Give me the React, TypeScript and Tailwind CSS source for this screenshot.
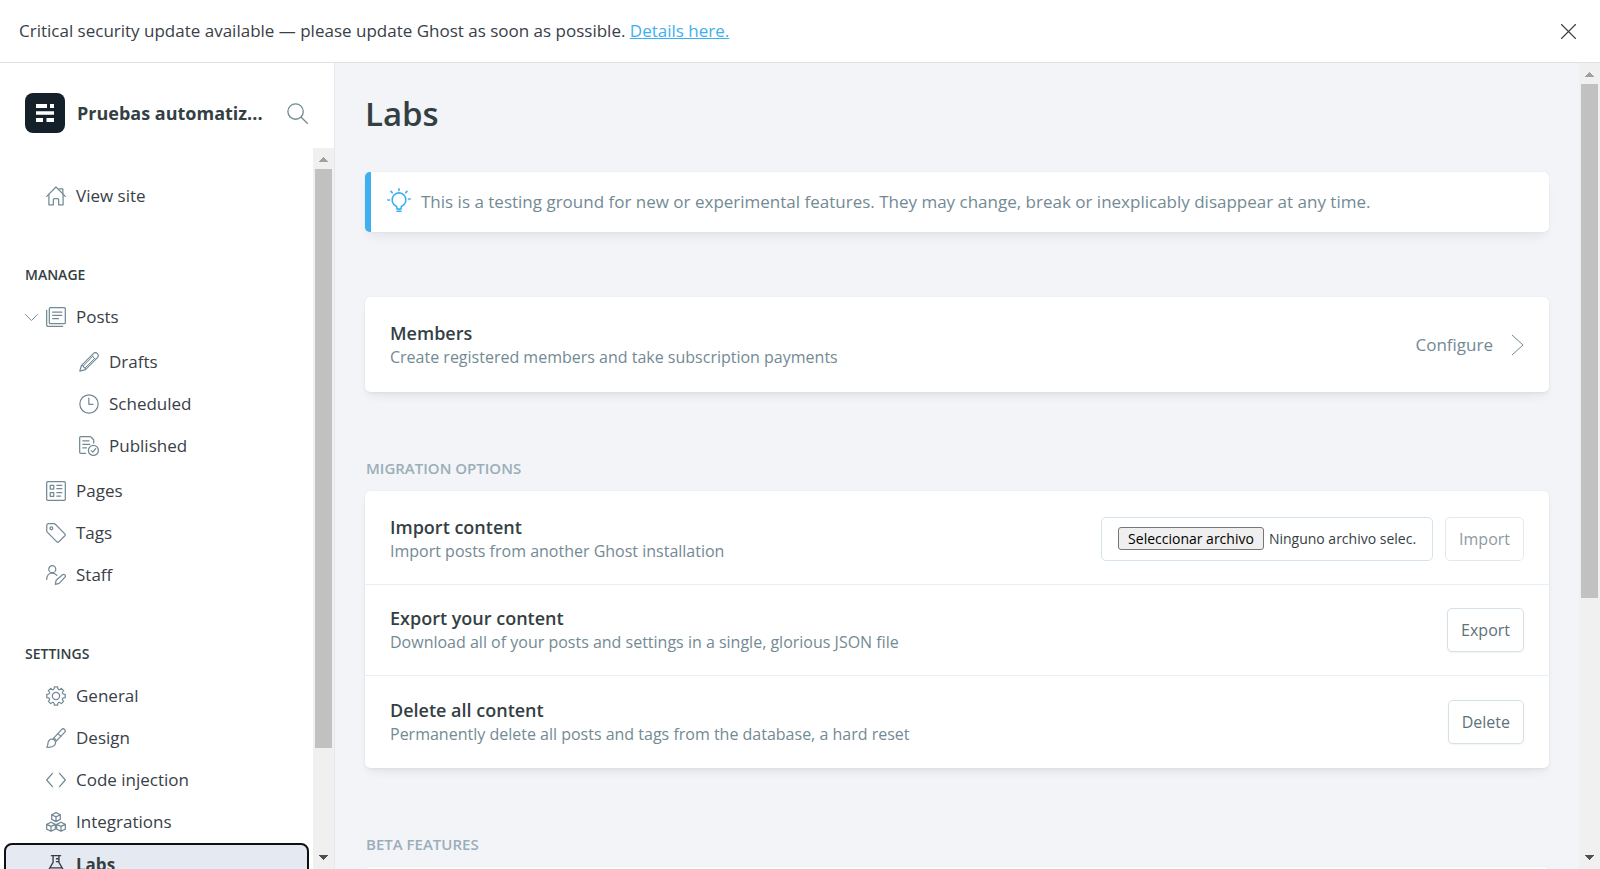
import type { ReactNode } from 'react'

function Icon({ children, className = 'size-5', width = 1.5 }: { children: ReactNode; className?: string; width?: number }) {
  return (
    <svg
      viewBox="0 0 24 24"
      className={`shrink-0 ${className}`}
      fill="none"
      stroke="currentColor"
      strokeWidth={width}
      strokeLinecap="round"
      strokeLinejoin="round"
      aria-hidden="true"
    >
      {children}
    </svg>
  )
}

const icons = {
  house: (
    <>
      <path d="M.8 12.5 12 1.2l11.2 11.3" />
      <path d="M3.5 10v12.6h5.3v-6.2a1.4 1.4 0 0 1 1.4-1.4h3.6a1.4 1.4 0 0 1 1.4 1.4v6.2h5.3V10" />
      <path d="M15.8 3.3h4.4v6" />
    </>
  ),
  posts: (
    <>
      <rect x="4" y=".8" width="19.2" height="19.2" rx="1.2" />
      <path d="M.8 4v17.7a1.5 1.5 0 0 0 1.5 1.5H20M8 6h11M8 10h11M8 14h7" />
    </>
  ),
  pencil: (
    <>
      <path d="m1 23 1.8-6.7L17.2 1.9a3.4 3.4 0 0 1 4.9 4.9L7.7 21.2z" />
      <path d="m15 4.1 4.9 4.9M2.8 16.3l2.4.4.5 2 1.700.3.300 2.200M5.200 16.700 17.200 4.600M7.400 19 19 7.500" strokeWidth="1.200" />
    </>
  ),
  clock: (
    <>
      <circle cx="12" cy="12" r="11" />
      <path d="M11.8 5v7.3h5" />
    </>
  ),
  published: (
    <>
      <path d="M8 20.8H2.3A1.5 1.5 0 0 1 .8 19.300V2.300A1.500 1.500 0 0 1 2.300.8h10.900c.4 0 .8.2 1.100.4l3 3c.3.3.4.7.4 1.100v3.200" />
      <path d="M4.500 5.800H12M4.500 10H13M4.500 14.200H9" />
      <circle cx="17.300" cy="17.300" r="6" />
      <path d="m14.700 17.500 1.900 1.900 3.400-4.300" />
    </>
  ),
  pages: (
    <>
      <rect x=".8" y=".8" width="22.400" height="22.400" rx="1.200" />
      <path d="M5 5.300h4.300v4.300H5zM5 14h4.300v4.300H5zM13 5.200h6M13 9.200h6M13 14h6M13 18h4.500" />
    </>
  ),
  tag: (
    <>
      <path d="M1 2.500A1.700 1.700 0 0 1 2.700.8h6.900c.6 0 1.200.2 1.600.7L22.600 13a1.700 1.700 0 0 1 0 2.300l-7.200 7.300a1.700 1.700 0 0 1-2.300 0L1.500 11c-.4-.5-.7-1-.7-1.600z" />
      <circle cx="6.400" cy="6.400" r="1.700" />
    </>
  ),
  staff: (
    <>
      <circle cx="7.500" cy="5" r="4.200" />
      <path d="M.8 17.300c0-4.300 2.500-7.600 6.700-7.600 2.400 0 4.300 1.100 5.500 2.800" />
      <path d="m11.200 23.200 1-5L19.800 11.700c2-1.500 4.500.8 3 2.900l-7 7.400z" />
    </>
  ),
  gear: (
    <>
      <circle cx="12" cy="12" r="4.300" />
      <path d="M10.050.97H13.950C13.840 4.630 15.910 5.490 18.420 2.830L21.170 5.580C18.510 8.090 19.370 10.160 23.030 10.050V13.950C19.370 13.840 18.510 15.910 21.170 18.420L18.420 21.170C15.910 18.510 13.840 19.370 13.950 23.030H10.050C10.160 19.370 8.090 18.510 5.580 21.170L2.830 18.420C5.490 15.910 4.630 13.840.97 13.950V10.050C4.630 10.160 5.490 8.090 2.830 5.580L5.580 2.830C8.090 5.490 10.160 4.630 10.050.97z" />
    </>
  ),
  brush: (
    <>
      <path d="M9 12.500 18.600 2c2.500-2.600 6 .6 3.700 3.300L12.600 15.500" />
      <path d="M9 12.500c1.700.4 3 1.500 3.600 3M14.300 6.700l3.600 3.400" />
      <path d="M1 23c1.700-2 .8-5.200 2.300-7.500 1.500-2.200 4-2.900 6.300-1.300 2.300 1.700 2.500 4.700.6 6.600C8 23 4 23.300 1 23z" />
    </>
  ),
  code: <path d="m7.700 4-6.900 8 6.900 8M16.300 4l6.900 8-6.900 8" />,
  cubes: (
    <>
      <path d="m12 .8 5.200 2.500v5.600L12 11.500 6.800 8.900V3.300zM6.800 3.300l5.200 2.500 5.200-2.500M12 5.800v5.700" />
      <path d="m6 12.300 5.200 2.500v5.700L6 23.100.8 20.500v-5.700zM.8 14.800 6 17.300l5.200-2.500M6 17.300v5.800" />
      <path d="m18 12.300 5.200 2.500v5.700L18 23.100l-5.200-2.600v-5.700zM12.800 14.800l5.200 2.500 5.200-2.500M18 17.300v5.800" />
    </>
  ),
  flask: (
    <>
      <path d="M6.500.8h11M8.500.8v8L1.200 21.300c-.5 1 .2 1.900 1.200 1.900h19.200c1 0 1.700-.9 1.200-1.900L15.500 8.800v-8M4.500 15.500h15M12.500 4.500h3M12.500 8h3" />
      <path d="M9 18.500h.1M14 17.500h.1" />
    </>
  ),
}

function NavItem({ icon, label, nested = false }: { icon: ReactNode; label: string; nested?: boolean }) {
  return (
    <li>
      <a href="#" className={`flex h-[42px] items-center gap-[10px] ${nested ? 'pl-[79px]' : 'pl-[46px]'}`}>
        <span className="flex text-[#738a94]">
          <Icon>{icon}</Icon>
        </span>
        {label}
      </a>
    </li>
  )
}

function Scrollbar({ thumb }: { thumb: string }) {
  return (
    <div className="flex w-[21px] shrink-0 flex-col items-center bg-[#f0f0f0]" aria-hidden="true">
      <svg viewBox="0 0 21 21" className="size-[21px] shrink-0" shapeRendering="crispEdges">
        <path d="M6 14h9l-4-5h-1z" fill="#a0a0a0" />
      </svg>
      <div className="flex w-full grow flex-col items-center">
        <div className={`w-[17px] bg-[#c1c1c1] ${thumb}`} />
      </div>
      <svg viewBox="0 0 21 21" className="size-[21px] shrink-0" shapeRendering="crispEdges">
        <path d="M6 7h9l-4 5h-1z" fill="#505050" />
      </svg>
    </div>
  )
}

const card = 'rounded-[5px] bg-white shadow-[0_0_1px_rgba(0,0,0,0.12),0_2px_4px_rgba(0,0,0,0.04),0_8px_12px_-4px_rgba(0,0,0,0.06)]'

function Setting({ title, text, children }: { title: string; text: string; children: ReactNode }) {
  return (
    <div className="flex h-[91px] items-center justify-between px-[25px]">
      <div>
        <h4 className="text-[18px] leading-6 font-semibold text-[#343f44]">{title}</h4>
        <p className="text-[16px] leading-6 text-[#738a94]">{text}</p>
      </div>
      {children}
    </div>
  )
}

const button = 'flex h-11 items-center rounded-[5px] border border-[#d5e1e8] bg-white px-[13px] text-[16px] text-[#5d7179]'
const groupTitle = 'mt-16 pl-px text-[15px] leading-6 font-semibold text-[#9baeb8]'
const navTitle = 'pl-[25px] text-[14px] leading-[22px] font-semibold text-[#343f44]'

export default function App() {
  return (
    <div className="flex h-screen flex-col overflow-hidden bg-white font-['Open_Sans','Noto_Sans',sans-serif] text-[17px] text-[#394047]">
      <aside className="flex h-[63px] shrink-0 items-center justify-between border-b border-[#dfe1e3] pr-6 pl-[19px]">
        <p>
          Critical security update available — please update Ghost as soon as possible.{' '}
          <a href="#" className="text-[#3eb0ef] underline">
            Details here.
          </a>
        </p>
        <button type="button" aria-label="Close" className="text-[#394047]">
          <Icon className="size-[15px]" width={1.8}>
            <path d="m.8.8 22.400 22.400M23.200.8.8 23.200" />
          </Icon>
        </button>
      </aside>

      <div className="flex min-h-0 grow">
        <nav className="flex w-[335px] shrink-0 flex-col border-r border-[#e3e9ed]">
          <header className="flex h-[85px] shrink-0 items-center pt-[15px] pr-[26px] pl-[25px]">
            <svg viewBox="0 0 40 40" className="size-10 shrink-0" aria-hidden="true">
              <rect width="40" height="40" rx="8" fill="#15212a" />
              <path d="M11 11h11v4H11zM25 11h4v4h-4zM11 18.200h18v3.600H11zM11 25h7v4h-7zM21.500 25H29v4h-7.500z" fill="#fff" />
            </svg>
            <h2 className="ml-3 min-w-0 grow truncate text-[18px] font-bold text-[#343f44]">Pruebas automatiz...</h2>
            <button type="button" aria-label="Search" className="ml-4 text-[#738a94]">
              <Icon className="size-[21px]" width={1.5}>
                <circle cx="9.800" cy="9.800" r="8.800" />
                <path d="m16.200 16.200 7 7" />
              </Icon>
            </button>
          </header>
          <div className="flex min-h-0 grow">
            <div className="min-w-0 grow overflow-hidden">
              <ul className="pt-[27px]">
                <NavItem icon={icons.house} label="View site" />
              </ul>
              <h3 className={`mt-[47px] ${navTitle}`}>MANAGE</h3>
              <ul className="mt-[10px]">
                <li>
                  <div className="flex h-[42px] items-center pl-[25px]">
                    <button type="button" aria-label="Collapse posts" className="mr-2 text-[#738a94]">
                      <Icon className="size-[13px]" width={1.8}>
                        <path d="m1 6.500 11 11 11-11" />
                      </Icon>
                    </button>
                    <a href="#" className="flex items-center gap-[10px]">
                      <span className="flex text-[#738a94]">
                        <Icon>{icons.posts}</Icon>
                      </span>
                      Posts
                    </a>
                  </div>
                  <ul className="py-[3px]">
                    <NavItem nested icon={icons.pencil} label="Drafts" />
                    <NavItem nested icon={icons.clock} label="Scheduled" />
                    <NavItem nested icon={icons.published} label="Published" />
                  </ul>
                </li>
                <NavItem icon={icons.pages} label="Pages" />
                <NavItem icon={icons.tag} label="Tags" />
                <NavItem icon={icons.staff} label="Staff" />
              </ul>
              <h3 className={`mt-[47px] ${navTitle}`}>SETTINGS</h3>
              <ul className="mt-[10px]">
                <NavItem icon={icons.gear} label="General" />
                <NavItem icon={icons.brush} label="Design" />
                <NavItem icon={icons.code} label="Code injection" />
                <NavItem icon={icons.cubes} label="Integrations" />
                <li className="px-1">
                  <a
                    href="#"
                    aria-current="page"
                    className="flex h-11 items-center gap-[10px] rounded-[8px] border-2 border-[#101010] bg-[#e5eaf2] pl-10 font-bold text-[#343f44]"
                  >
                    <Icon width={1.6}>{icons.flask}</Icon>
                    Labs
                  </a>
                </li>
              </ul>
            </div>
            <Scrollbar thumb="h-[579px]" />
          </div>
        </nav>

        <main className="flex min-w-0 grow bg-[#f2f4f8]">
          <div className="min-w-0 grow overflow-hidden px-[30px]">
            <h1 className="mt-[26px] text-[33px] leading-[50px] font-semibold text-[#343f44]">Labs</h1>

            <div className="mt-[33px] flex h-[60px] items-center rounded-[5px] border-l-[6px] border-[#3eb0ef] bg-white pl-4 text-[#738a94] shadow-[0_0_1px_rgba(0,60,110,0.2),0_8px_12px_-4px_rgba(0,0,0,0.07)]">
              <span className="flex pb-1 text-[#3eb0ef]">
                <Icon className="size-6" width={1.6}>
                  <path d="M9.800 20.300v-1.200c0-.5-.3-.8-.8-1.100a6.900 6.900 0 1 1 6 0c-.5.3-.8.6-.8 1.100v1.200a.8.8 0 0 1-.8.8h-2.800a.8.8 0 0 1-.8-.8zM10 23.200h4M12 .8v1.800M.8 12h1.700M21.500 11h1.700M4 3.400 5.200 4.600M20 3.400 18.800 4.600" />
                </Icon>
              </span>
              <p className="ml-[10px]">
                This is a testing ground for new or experimental features. They may change, break or inexplicably disappear at any time.
              </p>
            </div>

            <section className={`mt-[65px] py-[2px] ${card}`}>
              <Setting title="Members" text="Create registered members and take subscription payments">
                <a href="#" className="flex items-center gap-[18px] text-[#738a94]">
                  Configure
                  <svg viewBox="0 0 13 22" className="h-[22px] w-[13px]" fill="none" stroke="currentColor" aria-hidden="true">
                    <path d="m1 1 11 10L1 21" />
                  </svg>
                </a>
              </Setting>
            </section>

            <h3 className={groupTitle}>MIGRATION OPTIONS</h3>
            <section className={`mt-[11px] divide-y divide-[#e5eff5] pt-[3px] pb-px ${card}`}>
              <Setting title="Import content" text="Import posts from another Ghost installation">
                <div className="flex gap-3">
                  <label className="relative flex h-11 items-center rounded-[5px] border border-[#d5e3ed] px-4 pb-[2px] text-[14px] text-[#343f44]">
                    <input type="file" className="sr-only" />
                    <span className="mr-[5px] flex h-[23px] items-center rounded-[3px] border border-[#767676] bg-[#efefef] px-[9px] text-black">
                      Seleccionar archivo
                    </span>
                    Ninguno archivo selec.
                  </label>
                  <button type="button" disabled className={`${button} opacity-70`}>
                    Import
                  </button>
                </div>
              </Setting>
              <Setting title="Export your content" text="Download all of your posts and settings in a single, glorious JSON file">
                <button type="button" className={`${button} shadow-xs`}>
                  Export
                </button>
              </Setting>
              <Setting title="Delete all content" text="Permanently delete all posts and tags from the database, a hard reset">
                <button type="button" className={`${button} shadow-xs`}>
                  Delete
                </button>
              </Setting>
            </section>

            <h3 className={groupTitle}>BETA FEATURES</h3>
            <section className={`mt-[11px] h-24 ${card}`} />
          </div>
          <Scrollbar thumb="h-[514px]" />
        </main>
      </div>
    </div>
  )
}
